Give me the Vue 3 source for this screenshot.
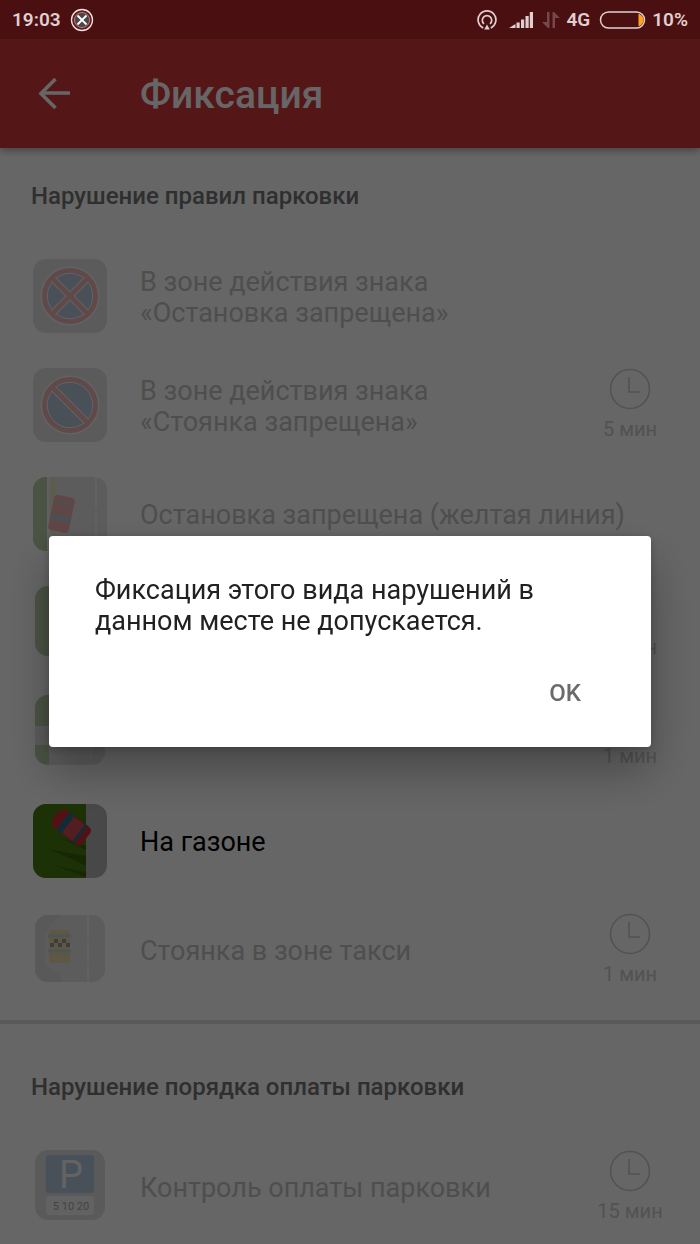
<template>
  <div class="screen">
    <header class="status">
      <span class="time">19:03</span>
      <svg class="ico-app" viewBox="0 0 24 24">
        <circle cx="12" cy="12" r="10.5" fill="#6e1517" stroke="#f0e6e6" stroke-width="1.3"/>
        <circle cx="12" cy="12" r="7.6" fill="#484848" stroke="#c9a5a5" stroke-width=".7"/>
        <path d="M7.500 7.500l9 9M16.500 7.500l-9 9" stroke="#fff" stroke-width="1.8"/>
      </svg>
      <span class="fill"></span>
      <svg class="ico-cast" viewBox="0 0 20 20" fill="none" stroke="#e0cfd0" stroke-width="1.7">
        <path d="M6.2 17.9A8.900 8.900 0 1 1 13.8 17.9"/>
        <path d="M7 13.900A4.700 4.700 0 1 1 13 13.900"/>
        <path d="M10 14.500l2.800 5H7.200z" fill="#e0cfd0" stroke="none"/>
      </svg>
      <svg class="ico-signal" viewBox="0 0 24 16" fill="#e0cfd0">
        <path d="M0 16l4-2.500V16zM4 13.500l2.500-1.500V16H4zM7.500 10.500h3.200V16H7.500zM12 7.500h3.200V16H12zM16.500 4h3.200v12h-3.200zM20.800 0H24v16h-3.200z"/>
      </svg>
      <svg class="ico-data" viewBox="0 0 18 16" fill="#74484a">
        <path d="M5 0h2.500v16H6L0 10h5zM10.500 0H12l6 6h-5v10h-2.500z"/>
      </svg>
      <span class="net">4G</span>
      <svg class="ico-battery" viewBox="0 0 46 18">
        <rect x="1" y="1" width="44" height="16" rx="8" fill="none" stroke="#e0cfd0" stroke-width="1.500"/>
        <path d="M39 3h1q4 2 4 6t-4 6h-1z" fill="#ffa01e"/>
      </svg>
      <span class="percent">10%</span>
    </header>

    <div class="toolbar">
      <button class="back" aria-label="Назад">
        <svg viewBox="0 0 32 32"><path d="M32 15H3M17.500 1L3 15.500 17.500 30" fill="none" stroke="#fff" stroke-width="3.600"/></svg>
      </button>
      <h1>Фиксация</h1>
    </div>

    <main>
      <section v-for="group in groups" :key="group.title">
        <h2>{{ group.title }}</h2>
        <button v-for="(item, i) in group.items" :key="i" class="row" :disabled="!item.enabled">
          <svg class="tile" viewBox="0 0 74 74">
            <template v-if="item.icon === 'stop' || item.icon === 'park'">
              <rect width="74" height="74" rx="13" fill="#bcbcbc"/>
              <circle cx="37" cy="37" r="29.500" fill="#eee"/>
              <circle cx="37" cy="37" r="25.500" fill="#4a78ac" stroke="#dc4a46" stroke-width="5"/>
              <circle cx="37" cy="37" r="22.700" fill="none" stroke="#e8e8e8"/>
              <path d="M20.500 20.500l33 33" stroke="#e8e8e8" stroke-width="7"/>
              <path v-if="item.icon === 'stop'" d="M53.500 20.500l-33 33" stroke="#e8e8e8" stroke-width="7"/>
              <path d="M19 19l36 36" stroke="#dc4a46" stroke-width="5"/>
              <path v-if="item.icon === 'stop'" d="M55 19L19 55" stroke="#dc4a46" stroke-width="5"/>
            </template>
            <template v-else-if="item.icon === 'yellow'">
              <rect width="74" height="74" rx="13" fill="#c4c4c4"/>
              <path d="M14 0h-1A13 13 0 0 0 0 13v48a13 13 0 0 0 13 13h1z" fill="#558a2c"/>
              <path d="M15 0v74" stroke="#ddd" stroke-width="2"/>
              <path d="M20 0v74" stroke="#e0b83c" stroke-width="3"/>
              <path d="M63 0v74" stroke="#e4e4e4" stroke-width="2" stroke-dasharray="33 3"/>
              <g transform="rotate(12 29 37)">
                <rect x="18" y="19" width="21" height="36" rx="4" fill="#dc3a36"/>
                <path d="M19 26h19" stroke="#3f8296" stroke-width="2"/>
                <path d="M19 41h19" stroke="#3f8296" stroke-width="5"/>
              </g>
            </template>
            <template v-else-if="item.icon === 'grass'">
              <rect x="2" width="70" height="70" rx="13" fill="#558a2c"/>
            </template>
            <template v-else-if="item.icon === 'crossing'">
              <rect x="2" width="70" height="70" rx="13" fill="#bcbcbc"/>
              <path d="M16 0h-1A13 13 0 0 0 2 13v18h14zM2 50h14v20h-1A13 13 0 0 1 2 57z" fill="#558a2c"/>
              <path d="M58 0v70" stroke="#e4e4e4" stroke-dasharray="14 3"/>
            </template>
            <template v-else-if="item.icon === 'lawn'">
              <rect width="74" height="74" rx="13" fill="#b4b4b4"/>
              <path d="M53 0H13A13 13 0 0 0 0 13v48a13 13 0 0 0 13 13h40z" fill="#467c10"/>
              <path d="M15 45q20 4 38 7v10q-20-10-38-17zM17 60q20 6 36 8v5q-20-7-36-13zM28 34l25 8v4z" fill="#3b620c"/>
              <g transform="rotate(37 38 23)">
                <path d="M24 12h28q5 0 5 5v12q0 5-5 5H24q-6-3-6-11t6-11z" fill="#ce2c36"/>
                <path d="M34 13h15v20H34z" fill="#cc4c56"/>
                <path d="M31 12v22" stroke="#27708a" stroke-width="6"/>
                <path d="M49 12v22" stroke="#27708a" stroke-width="3"/>
              </g>
            </template>
            <template v-else-if="item.icon === 'taxi'">
              <rect x="2" y="2" width="70" height="67" rx="13" fill="#c2c2c2"/>
              <path d="M28 2H15A13 13 0 0 0 2 15v41a13 13 0 0 0 13 13h13v-6L12 52V19z" fill="#aeaeae"/>
              <path d="M55 2v67" stroke="#e4e4e4" stroke-width="2" stroke-dasharray="22 2"/>
              <rect x="16" y="17" width="21" height="33" rx="4" fill="#cfa530"/>
              <path d="M15 23h23M15 38h23" stroke="#5ba0aa" stroke-width="3"/>
              <path d="M17 30h4v4h-4zM21 26h4v4h-4zM25 30h4v4h-4zM29 26h4v4h-4zM33 30h4v4h-4z" fill="#000"/>
            </template>
            <template v-else>
              <rect x="2" width="70" height="70" rx="13" fill="#b8b8b8"/>
              <rect x="13" y="5" width="48" height="38" rx="3" fill="#4674b2"/>
              <rect x="13" y="46" width="48" height="19" rx="3" fill="#e4e4e4"/>
              <text class="sign-p" x="38" y="38">P</text>
              <text class="sign-n" x="38" y="60">5 10 20</text>
            </template>
          </svg>
          <span class="name">{{ item.name }}</span>
          <span v-if="item.wait" class="wait">
            <svg viewBox="0 0 42 42" fill="none" stroke="currentColor" stroke-width="1.600">
              <circle cx="21" cy="21" r="19.500"/>
              <path d="M20 9v15h11"/>
            </svg>
            {{ item.wait }}
          </span>
        </button>
      </section>
    </main>

    <div v-if="open" class="scrim">
      <div class="dialog" role="alertdialog" aria-modal="true" aria-describedby="msg">
        <p id="msg">Фиксация этого вида нарушений в данном месте не допускается.</p>
        <button class="ok" @click="open = false">OK</button>
      </div>
    </div>
  </div>
</template>

<script setup>
import { ref } from 'vue';

const open = ref(true);

const groups = [
  {
    title: 'Нарушение правил парковки',
    items: [
      { icon: 'stop', name: 'В зоне действия знака\n«Остановка запрещена»' },
      { icon: 'park', name: 'В зоне действия знака\n«Стоянка запрещена»', wait: '5 мин' },
      { icon: 'yellow', name: 'Остановка запрещена (желтая линия)' },
      { icon: 'grass', name: '', wait: '1 мин' },
      { icon: 'crossing', name: '', wait: '1 мин' },
      { icon: 'lawn', name: 'На газоне', enabled: true },
      { icon: 'taxi', name: 'Стоянка в зоне такси', wait: '1 мин' }
    ]
  },
  {
    title: 'Нарушение порядка оплаты парковки',
    items: [
      { icon: 'paid', name: 'Контроль оплаты парковки', wait: '15 мин' }
    ]
  }
];
</script>

<style>
body{ margin:0; background:#fff; }
</style>

<style scoped>
.screen{ min-height:100vh; display:flex; flex-direction:column; font-family:Roboto, "Noto Sans", sans-serif; color:#000; }
button{ border:none; background:none; padding:0; margin:0; font:inherit; color:inherit; cursor:pointer; }
.status{
  position:sticky; top:0; z-index:3; height:39px; box-sizing:border-box; padding:0 12px; display:flex; align-items:center;
  background:#4a1011; color:#e0cfd0; font-size:19px; font-weight:600;
}
.status svg{ flex:none; }
.ico-app{ width:24px; height:24px; margin-left:9px; }
.fill{ flex:1; }
.ico-cast{ width:20px; height:20px; margin-right:12px; }
.ico-signal{ width:24px; height:16px; margin-right:9px; }
.ico-data{ width:18px; height:16px; margin-right:6px; }
.ico-battery{ width:47px; height:18px; margin:0 6px 0 9px; }
.toolbar{
  position:relative; height:109px; display:flex; align-items:center; background:#d4393c; color:#fff;
  box-shadow:0 2px 8px rgba(0,0,0,.4);
}
.back{ width:32px; height:32px; margin:0 70px 0 38px; }
.back svg{ display:block; }
h1{ margin:0; padding-top:2px; font-size:39px; font-weight:500; }
section{ padding-bottom:14px; }
section + section{ border-top:4px solid #e2e2e2; padding-top:15px; }
h2{ margin:0; padding:2px 31px 0; font-size:24px; font-weight:500; line-height:93px; color:#757575; }
.row{
  width:100%; height:109px; padding:0 33px; display:flex; align-items:center; text-align:left;
  font-size:27px; line-height:31px;
}
.row:disabled{ cursor:default; }
.tile{ flex:none; width:74px; height:74px; margin:0 33px 4px 0; }
.row:disabled .tile{ opacity:.4; }
.name{ flex:1; white-space:pre-line; }
.row:disabled .name{ color:#c4c4c4; }
.wait{
  width:74px; margin-bottom:3px; display:flex; flex-direction:column; align-items:center; gap:5px; white-space:nowrap;
  font-size:20px; line-height:28px; color:#cdcdcd;
}
.wait svg{ width:42px; height:42px; }
.sign-p{ font-size:38px; text-anchor:middle; fill:#eee; }
.sign-n{ font-size:11px; text-anchor:middle; fill:#222; }
.scrim{
  position:fixed; inset:0; z-index:2; padding:39px 49px 0; display:flex; align-items:center; justify-content:center;
  background:rgba(0,0,0,.6);
}
.dialog{
  flex:1; padding:39px 46px 19px; display:flex; flex-direction:column; background:#fff; border-radius:4px;
  box-shadow:0 24px 46px rgba(0,0,0,.3), 0 2px 10px rgba(0,0,0,.2);
}
.dialog p{ margin:0; font-size:27px; line-height:31px; color:#212121; }
.ok{ align-self:flex-end; margin-top:21px; padding:0 24px; height:70px; font-size:24px; font-weight:500; color:#6b6b6b; }
</style>
